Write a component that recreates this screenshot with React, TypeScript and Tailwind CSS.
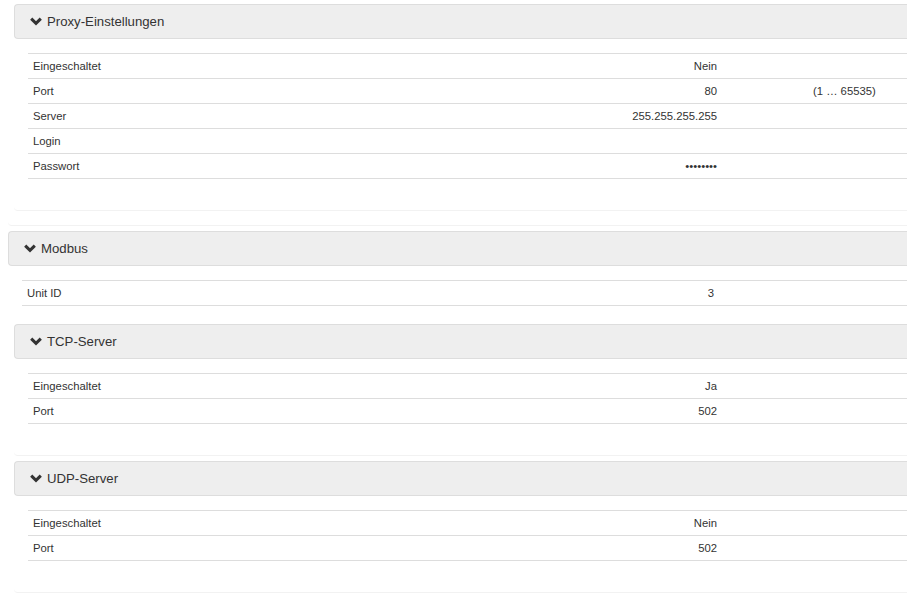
import React from "react";

type Row = { label: string; value: string; range?: string };

function Chevron() {
  return (
    <svg width="12" height="9" viewBox="0 0 12 9" className="shrink-0">
      <path d="M1.2 1.6 L6 6.4 L10.8 1.6" fill="none" stroke="#333" strokeWidth="3" strokeLinecap="butt" strokeLinejoin="miter" />
    </svg>
  );
}

function Heading({ title }: { title: string }) {
  return (
    <div className="h-[35px] bg-[#eeeeee] border border-r-0 border-[#dddddd] rounded-l-[4px] flex items-center pl-[15px] gap-[5px]">
      <Chevron />
      <span className="text-[13.2px] text-[#333]">{title}</span>
    </div>
  );
}

function Table({ rows, valueCols }: { rows: Row[]; valueCols: string }) {
  return (
    <div className="border-b border-[#dddddd]">
      {rows.map((r) => (
        <div key={r.label} className={`grid ${valueCols} h-[25px] border-t border-[#dddddd] items-center text-[11.3px] text-[#333]`}>
          <div className="pl-[5px]">{r.label}</div>
          <div className="pr-[5px] text-right">{r.value}</div>
          <div className="pl-[91px]">{r.range ?? ""}</div>
        </div>
      ))}
    </div>
  );
}

function SubPanel({ title, rows }: { title: string; rows: Row[] }) {
  return (
    <div className="ml-[6px] border-b border-[#f2f2f2] rounded-bl-[4px]">
      <Heading title={title} />
      <div className="pt-[14px] pl-[14px] pb-[31px]">
        <Table rows={rows} valueCols="grid-cols-[400px_294px_1fr]" />
      </div>
    </div>
  );
}

export default function App() {
  const proxy: Row[] = [
    { label: "Eingeschaltet", value: "Nein" },
    { label: "Port", value: "80", range: "(1 … 65535)" },
    { label: "Server", value: "255.255.255.255" },
    { label: "Login", value: "" },
    { label: "Passwort", value: "••••••••" },
  ];
  const tcp: Row[] = [
    { label: "Eingeschaltet", value: "Ja" },
    { label: "Port", value: "502" },
  ];
  const udp: Row[] = [
    { label: "Eingeschaltet", value: "Nein" },
    { label: "Port", value: "502" },
  ];

  return (
    <div className="w-[907px] h-[596px] overflow-hidden bg-white" style={{ fontFamily: '"Liberation Sans", Arial, sans-serif' }}>
      <div className="w-[960px]">
        {/* Network settings panel (lower part) */}
        <div className="ml-[8px] pt-[4px] pb-[14px] border-b border-[#f2f2f2] rounded-bl-[4px]">
          <SubPanel title="Proxy-Einstellungen" rows={proxy} />
        </div>

        {/* Modbus panel */}
        <div className="ml-[8px] mt-[5px]">
          <Heading title="Modbus" />
          <div className="pt-[14px] pl-[14px]">
            <Table rows={[{ label: "Unit ID", value: "3" }]} valueCols="grid-cols-[400px_297px_1fr]" />
          </div>
          <div className="mt-[18px]">
            <SubPanel title="TCP-Server" rows={tcp} />
          </div>
          <div className="mt-[5px]">
            <SubPanel title="UDP-Server" rows={udp} />
          </div>
        </div>
      </div>
    </div>
  );
}
